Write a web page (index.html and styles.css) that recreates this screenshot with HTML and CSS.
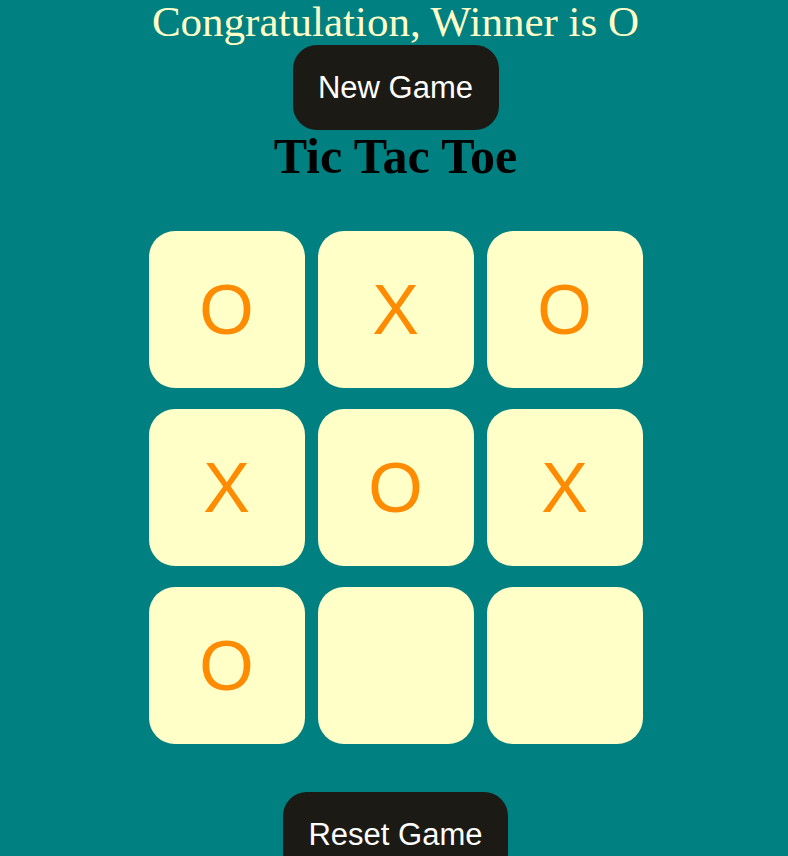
FILE: index.html
```html
<!DOCTYPE html>
<html>
<head>
<meta charset="utf-8">
<link rel="stylesheet" href="styles.css">
</head>
<body>
<main class="game">
  <p class="msg">Congratulation, Winner is O</p>
  <button class="btn btn-new">New Game</button>
  <h1 class="title">Tic Tac Toe</h1>
  <div class="board">
    <button class="cell">O</button>
    <button class="cell">X</button>
    <button class="cell">O</button>
    <button class="cell">X</button>
    <button class="cell">O</button>
    <button class="cell">X</button>
    <button class="cell">O</button>
    <button class="cell"></button>
    <button class="cell"></button>
  </div>
  <button class="btn btn-reset">Reset Game</button>
</main>
</body>
</html>
```
FILE: styles.css
```css
html, body {
  margin: 0;
  padding: 0;
  background: #008080;
}
body {
  overflow: hidden;
  height: 856px;
}
.game {
  display: flex;
  flex-direction: column;
  align-items: center;
  padding-left: 3px;
}
.msg {
  margin: 0;
  font-family: "Liberation Serif", serif;
  font-size: 43px;
  line-height: 44px;
  color: #ffffc7;
}
.btn {
  border: none;
  background: #1b1a15;
  color: #ffffff;
  font-family: "Liberation Sans", Arial, sans-serif;
  font-size: 31px;
  border-radius: 24px;
  padding: 0;
}
.btn-new {
  margin-top: 1px;
  width: 206px;
  height: 85px;
}
.title {
  margin: 0;
  font-family: "Liberation Serif", serif;
  font-weight: bold;
  font-size: 50px;
  line-height: 52px;
  color: #000;
}
.board {
  margin-top: 49px;
  display: grid;
  grid-template-columns: repeat(3, 156px);
  grid-auto-rows: 157px;
  column-gap: 13px;
  row-gap: 21px;
}
.cell {
  border: none;
  padding: 0;
  background: #ffffc7;
  border-radius: 26px;
  color: #ff8c00;
  font-family: "Liberation Sans", Arial, sans-serif;
  font-size: 70px;
}
.btn-reset {
  margin-top: 48px;
  width: 225px;
  height: 85px;
}
```
